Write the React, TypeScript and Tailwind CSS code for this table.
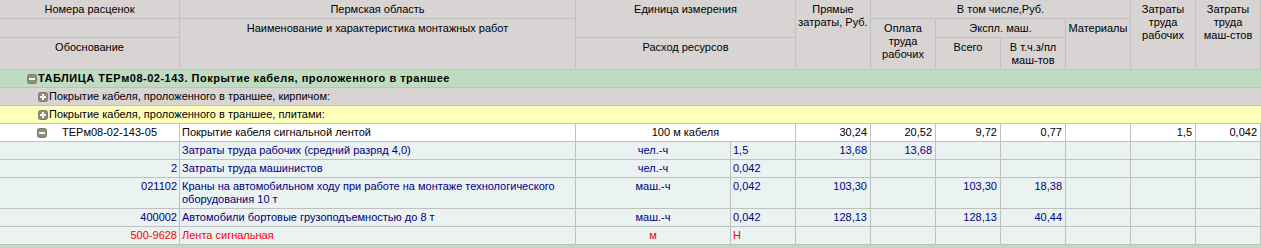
const FONT = "font-['Tahoma','Liberation_Sans',sans-serif] text-[11px]";

const COLS =
  "grid grid-cols-[180px_396px_155px_65px_75px_65px_65px_65px_65px_65px_65px]";

function Toggle({ open }: { open: boolean }) {
  return (
    <svg width="10" height="10" viewBox="0 0 10 10" className="shrink-0">
      <rect x="0.5" y="0.5" width="9" height="9" rx="2" fill="#8e8e7c" stroke="#7a7a68" />
      <rect x="2" y="4" width="6" height="2" fill="#f4f4ec" />
      {!open && <rect x="4" y="2" width="2" height="6" fill="#f4f4ec" />}
    </svg>
  );
}

const hd = "border-r border-b border-[#c4c0c0] text-center text-black leading-[13px]";

function Header() {
  return (
    <div
      className={`grid grid-cols-[180px_396px_220px_75px_65px_65px_65px_65px_65px_65px] grid-rows-[19px_19px_32px] bg-[#d8d4d4]`}
    >
      <div className={`${hd} col-start-1 row-start-1 pt-[3px]`}>Номера расценок</div>
      <div className={`${hd} col-start-1 row-start-2`} />
      <div className={`${hd} col-start-1 row-start-3 pt-[3px]`}>Обоснование</div>

      <div className={`${hd} col-start-2 row-start-1 pt-[3px]`}>Пермская область</div>
      <div className={`${hd} col-start-2 row-start-2 row-span-2 pt-[3px]`}>
        Наименование и характеристика монтажных работ
      </div>

      <div className={`${hd} col-start-3 row-start-1 row-span-2 pt-[3px]`}>Единица измерения</div>
      <div className={`${hd} col-start-3 row-start-3 pt-[3px]`}>Расход ресурсов</div>

      <div className={`${hd} col-start-4 row-start-1 row-span-3 pt-[3px]`}>
        Прямые
        <br />
        затраты, Руб.
      </div>

      <div className={`${hd} col-start-5 col-span-4 row-start-1 pt-[3px]`}>В том числе,Руб.</div>
      <div className={`${hd} col-start-5 row-start-2 row-span-2 pt-[3px]`}>
        Оплата
        <br />
        труда
        <br />
        рабочих
      </div>
      <div className={`${hd} col-start-6 col-span-2 row-start-2 pt-[3px]`}>Экспл. маш.</div>
      <div className={`${hd} col-start-6 row-start-3 pt-[3px]`}>Всего</div>
      <div className={`${hd} col-start-7 row-start-3 pt-[3px]`}>
        В т.ч.з/пл
        <br />
        маш-тов
      </div>
      <div className={`${hd} col-start-8 row-start-2 row-span-2 pt-[3px]`}>Материалы</div>

      <div className={`${hd} col-start-9 row-start-1 row-span-3 pt-[3px]`}>
        Затраты
        <br />
        труда
        <br />
        рабочих
      </div>
      <div className={`${hd} col-start-10 row-start-1 row-span-3 pt-[3px]`}>
        Затраты
        <br />
        труда
        <br />
        маш-стов
      </div>
    </div>
  );
}

type Sub = {
  code: string;
  name: string[];
  unit: string;
  qty: string;
  vals: string[];
  red?: boolean;
};

const SUBS: Sub[] = [
  {
    code: "",
    name: ["Затраты труда рабочих (средний разряд 4,0)"],
    unit: "чел.-ч",
    qty: "1,5",
    vals: ["13,68", "13,68", "", "", "", "", ""],
  },
  {
    code: "2",
    name: ["Затраты труда машинистов"],
    unit: "чел.-ч",
    qty: "0,042",
    vals: ["", "", "", "", "", "", ""],
  },
  {
    code: "021102",
    name: [
      "Краны на автомобильном ходу при работе на монтаже технологического",
      "оборудования 10 т",
    ],
    unit: "маш.-ч",
    qty: "0,042",
    vals: ["103,30", "", "103,30", "18,38", "", "", ""],
  },
  {
    code: "400002",
    name: ["Автомобили бортовые грузоподъемностью до 8 т"],
    unit: "маш.-ч",
    qty: "0,042",
    vals: ["128,13", "", "128,13", "40,44", "", "", ""],
  },
  {
    code: "500-9628",
    name: ["Лента сигнальная"],
    unit: "м",
    qty: "Н",
    vals: ["", "", "", "", "", "", ""],
    red: true,
  },
];

const cell = "border-r border-b border-[#c0c0c0] leading-[13px] pt-[2px] pb-[2px] whitespace-nowrap overflow-hidden";

function GroupRow({
  bg,
  indent,
  bold,
  open,
  text,
}: {
  bg: string;
  indent: string;
  bold?: boolean;
  open: boolean;
  text: string;
}) {
  return (
    <div className={`h-[18px] border-b border-[#c0c0c0] flex items-center gap-[1px] ${bg} ${indent}`}>
      <Toggle open={open} />
      <span className={`text-black ${bold ? "font-bold tracking-[0.5px]" : ""}`}>{text}</span>
    </div>
  );
}

export default function App() {
  return (
    <div className={`w-[1261px] h-[248px] overflow-hidden bg-white ${FONT}`}>
      <Header />

      <GroupRow
        bg="bg-[#c0dcc0]"
        indent="pl-[27px]"
        bold
        open
        text="ТАБЛИЦА ТЕРм08-02-143. Покрытие кабеля, проложенного в траншее"
      />
      <GroupRow
        bg="bg-[#d8d4d4]"
        indent="pl-[38px]"
        open={false}
        text="Покрытие кабеля, проложенного в траншее, кирпичом:"
      />
      <GroupRow
        bg="bg-[#ffffbc]"
        indent="pl-[38px]"
        open={false}
        text="Покрытие кабеля, проложенного в траншее, плитами:"
      />

      {/* main rate row */}
      <div className={`${COLS} bg-white text-black`}>
        <div className={`${cell} flex items-center pl-[37px] gap-[15px]`}>
          <Toggle open />
          <span>ТЕРм08-02-143-05</span>
        </div>
        <div className={`${cell} pl-[2px]`}>Покрытие кабеля сигнальной лентой</div>
        <div className={`${cell} col-span-2 text-center`}>100 м кабеля</div>
        {["30,24", "20,52", "9,72", "0,77", "", "1,5", "0,042"].map((v, i) => (
          <div key={i} className={`${cell} text-right pr-[3px]`}>
            {v}
          </div>
        ))}
      </div>

      {SUBS.map((s, r) => {
        const color = s.red ? "text-[#ff0000]" : "text-[#000080]";
        return (
          <div key={r} className={`${COLS} bg-[#eaf2f2] ${color}`}>
            <div className={`${cell} text-right pr-[2px]`}>{s.code}</div>
            <div className={`${cell} pl-[2px]`}>
              {s.name.map((l, k) => (
                <div key={k}>{l}</div>
              ))}
            </div>
            <div className={`${cell} text-center`}>{s.unit}</div>
            <div className={`${cell} pl-[2px]`}>{s.qty}</div>
            {s.vals.map((v, i) => (
              <div key={i} className={`${cell} text-right pr-[3px]`}>
                {v}
              </div>
            ))}
          </div>
        );
      })}

      <div className="h-[20px] bg-[#c0dcc0]" />
    </div>
  );
}
